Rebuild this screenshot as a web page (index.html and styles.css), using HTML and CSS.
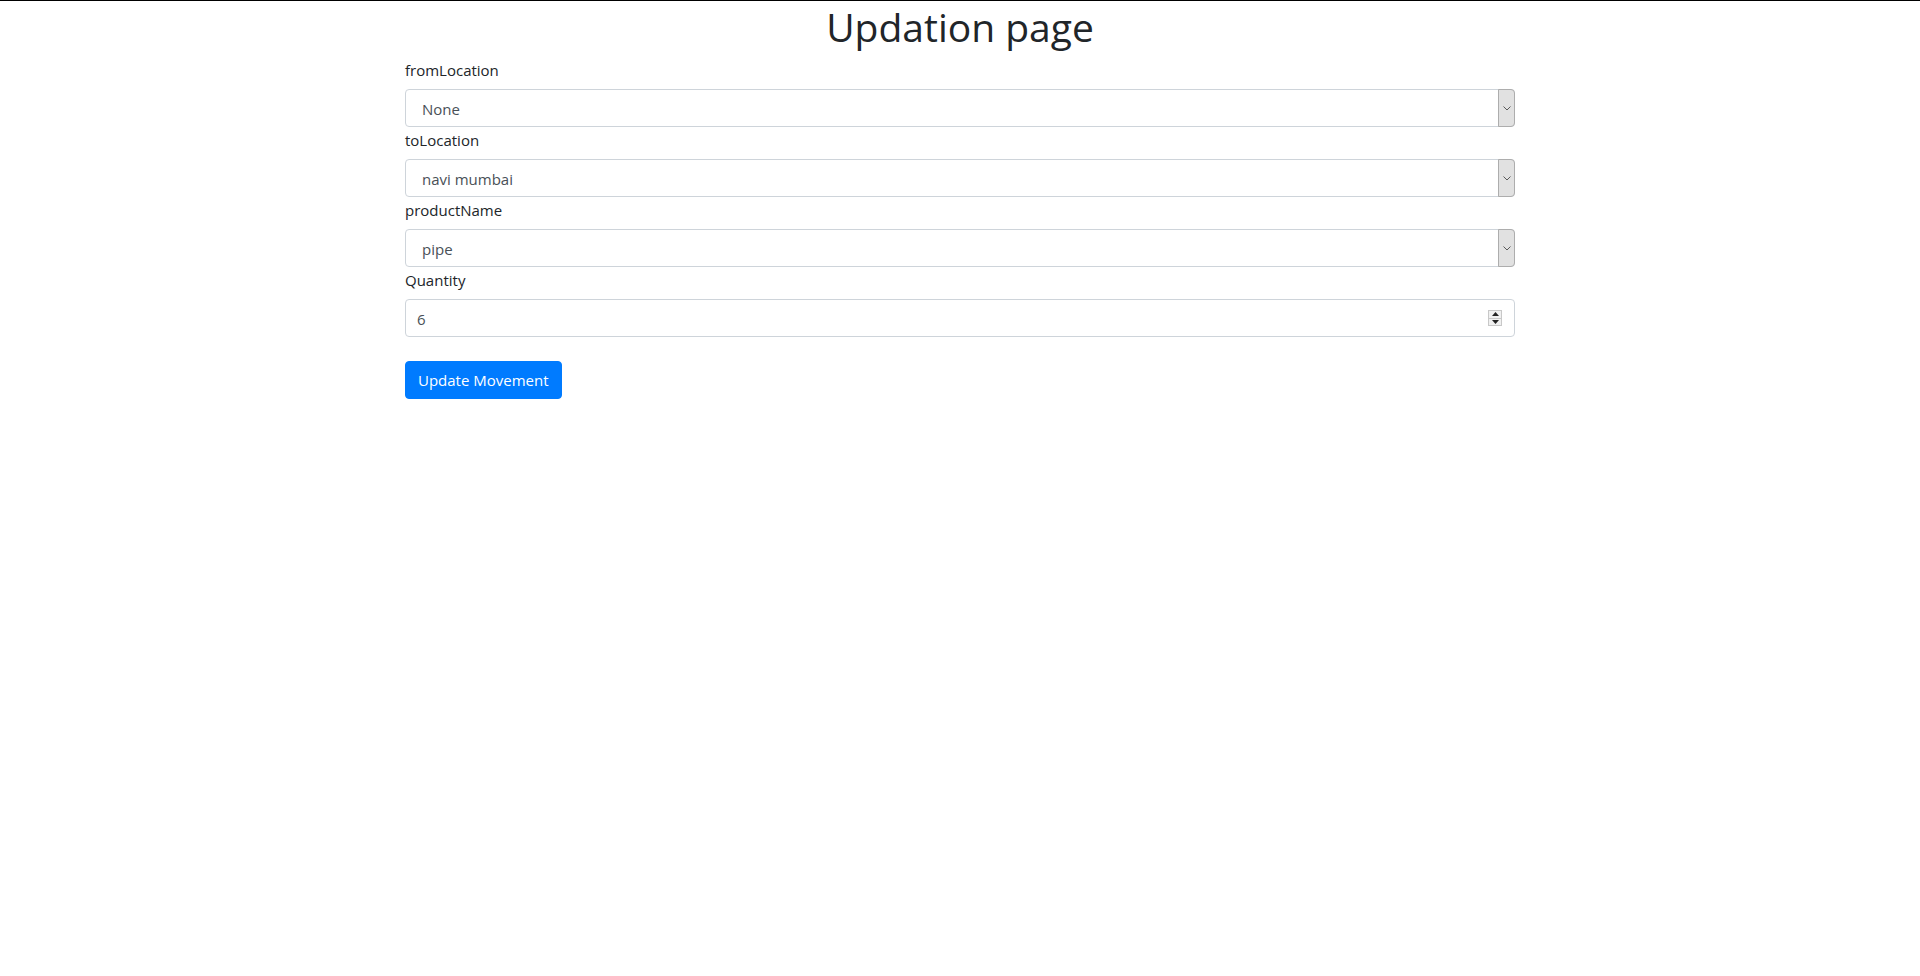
FILE: index.html
```
<!DOCTYPE html>
<html lang="en">
<head>
<meta charset="utf-8">
<title>Updation page</title>
<link rel="stylesheet" href="styles.css">
</head>
<body>
<div class="container">
  <h1 class="title">Updation page</h1>
  <form class="form">
    <div class="field">
      <label class="label">fromLocation</label>
      <div class="select">
        <span class="select-value">None</span>
        <span class="select-arrow"><svg width="8" height="5" viewBox="0 0 8 5"><path d="M0.5 0.5 L4 4 L7.5 0.5" fill="none" stroke="#5a5a5a" stroke-width="1"/></svg></span>
      </div>
    </div>
    <div class="field">
      <label class="label">toLocation</label>
      <div class="select">
        <span class="select-value">navi mumbai</span>
        <span class="select-arrow"><svg width="8" height="5" viewBox="0 0 8 5"><path d="M0.5 0.5 L4 4 L7.5 0.5" fill="none" stroke="#5a5a5a" stroke-width="1"/></svg></span>
      </div>
    </div>
    <div class="field">
      <label class="label">productName</label>
      <div class="select">
        <span class="select-value">pipe</span>
        <span class="select-arrow"><svg width="8" height="5" viewBox="0 0 8 5"><path d="M0.5 0.5 L4 4 L7.5 0.5" fill="none" stroke="#5a5a5a" stroke-width="1"/></svg></span>
      </div>
    </div>
    <div class="field">
      <label class="label">Quantity</label>
      <div class="number">
        <span class="number-value">6</span>
        <span class="spinner">
          <span class="spin"><svg width="7" height="4" viewBox="0 0 7 4"><path d="M0 4 L3.5 0 L7 4 Z" fill="#222"/></svg></span>
          <span class="spin"><svg width="7" height="4" viewBox="0 0 7 4"><path d="M0 0 L3.5 4 L7 0 Z" fill="#222"/></svg></span>
        </span>
      </div>
    </div>
    <button type="button" class="btn">Update Movement</button>
  </form>
</div>
</body>
</html>
```
FILE: styles.css
```
html, body {
  margin: 0;
  padding: 0;
}
body {
  border-top: 1px solid #000;
  background: #fff;
  color: #212529;
  font-family: "Open Sans", "Noto Sans", "Liberation Sans", sans-serif;
  font-size: 16px;
  line-height: 24px;
}
.container {
  width: 1110px;
  margin: 0 auto;
}
.title {
  margin: 0 0 6px;
  padding-top: 2px;
  font-size: 39px;
  line-height: 48px;
  font-weight: 400;
  text-align: center;
  color: #212529;
}
.form {
  display: flex;
  flex-direction: column;
  align-items: stretch;
}
.field {
  display: flex;
  flex-direction: column;
}
.label {
  display: block;
  margin-bottom: 8px;
  padding-top: 1px;
  height: 23px;
  font-size: 15px;
}
.select, .number {
  box-sizing: border-box;
  height: 38px;
  border: 1px solid #ced4da;
  border-radius: 4px;
  display: flex;
  align-items: center;
  color: #495057;
  font-size: 15px;
}
.select-value {
  flex: 1;
  padding-left: 16px;
  padding-top: 1px;
}
.select-arrow {
  align-self: stretch;
  width: 17px;
  margin: -1px -1px -1px 0;
  box-sizing: border-box;
  border: 1px solid #adadad;
  border-radius: 0 4px 4px 0;
  background: #e1e1e1;
  display: flex;
  align-items: center;
  justify-content: center;
}
.number-value {
  flex: 1;
  padding-left: 11px;
  padding-top: 1px;
}
.spinner {
  width: 14px;
  height: 16px;
  margin-right: 12px;
  box-sizing: border-box;
  border: 1px solid #c8c8c8;
  background: #f0f0f0;
  display: flex;
  flex-direction: column;
}
.spin {
  flex: 1;
  display: flex;
  align-items: center;
  justify-content: center;
}
.spin + .spin {
  border-top: 1px solid #c8c8c8;
}
.btn {
  align-self: flex-start;
  margin-top: 24px;
  height: 38px;
  padding: 6px 12px;
  border: 1px solid #007bff;
  border-radius: 4px;
  background: #007bff;
  color: #fff;
  font-family: inherit;
  font-size: 15px;
  line-height: 24px;
}
```
